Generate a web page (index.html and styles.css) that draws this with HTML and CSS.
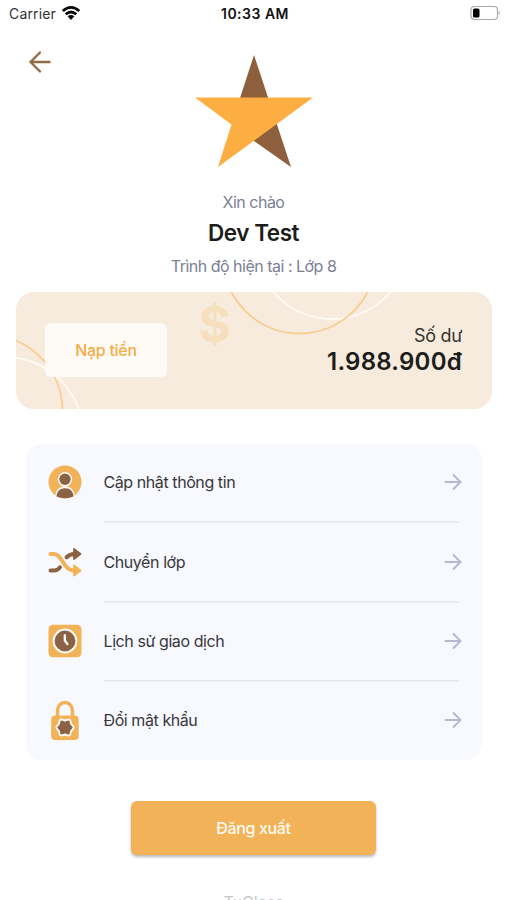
FILE: index.html
```html
<!DOCTYPE html>
<html lang="vi">
<head>
<meta charset="utf-8">
<title>Tài khoản</title>
<link rel="stylesheet" href="styles.css">
</head>
<body>
<header class="status">
  <div class="carrier"><span>Carrier</span>
    <svg width="20" height="16" viewBox="0 0 20 16" fill="none" stroke="#080808" stroke-width="2.700"><path d="M1.700 6Q10-1.300 18.300 6M4.700 9.300Q10 4.700 15.300 9.300"/><path d="M6.600 11.300Q10 8.500 13.400 11.300L10 14.900Z" fill="#080808" stroke="none"/></svg>
  </div>
  <span class="time">10:33 AM</span>
  <svg class="battery" width="31" height="16" viewBox="0 0 31 16"><rect x="1" y="1.500" width="26.500" height="13" rx="3.500" fill="#fff" stroke="#aaa" stroke-width="1.200"/><rect x="3" y="3.500" width="6.500" height="9" rx="1.500" fill="#000"/><path d="M28.700 5.800q2.400 2.200 0 4.400z" fill="#aaa"/></svg>
</header>
<nav class="nav">
  <svg width="24" height="24" viewBox="0 0 24 24" fill="none" stroke="#946a45" stroke-width="2.400" stroke-linecap="round" stroke-linejoin="round"><path d="M21.500 12H2.500M12 2.500L2.500 12l9.500 9.500"/></svg>
</nav>
<section class="profile">
  <svg class="star" width="120" height="114" viewBox="0 0 120 114"><path d="M60 1L97 113 40 73 46 44Z" fill="#8e5f3c"/><path d="M1 43.500H119L24 113 37.500 70.500Z" fill="#fdae42"/></svg>
  <p class="hello">Xin chào</p>
  <h1 class="name">Dev Test</h1>
  <p class="level">Trình độ hiện tại : Lớp 8</p>
</section>
<section class="wallet">
  <svg class="wallet-art" width="476" height="117" viewBox="0 0 476 117" fill="none">
    <circle cx="316" cy="-50" r="77" stroke="#fffaf4" stroke-width="2"/>
    <circle cx="283.500" cy="-35" r="76.500" stroke="#fbcb8b" stroke-width="1.800"/>
    <circle cx="-30" cy="119" r="76.500" stroke="#fbcb8b" stroke-width="1.800"/>
    <circle cx="-11" cy="143" r="78" stroke="#fffaf4" stroke-width="2"/>
    <text class="dollar" x="198.500" y="50" text-anchor="middle">$</text>
  </svg>
  <button class="topup">Nạp tiền</button>
  <div class="balance"><span class="balance-label">Số dư</span><strong class="amount">1.988.900đ</strong></div>
</section>
<ul class="menu">
  <li class="row">
    <svg class="icon" width="34" height="42" viewBox="0 0 34 42"><circle cx="17" cy="21" r="16.500" fill="#f2b257"/><circle cx="17" cy="18.300" r="7.200" fill="#fbfaf8"/><path d="M7.500 36v-2a9.500 9 0 0 1 19 0v2z" fill="#fbfaf8"/><circle cx="17" cy="18.300" r="5.700" fill="#8b6243"/><path d="M8.500 35.500c0-5 3.400-8.300 8.500-8.300s8.500 3.300 8.500 8.300q-8.500 3.500-17 0z" fill="#8b6243"/></svg>
    <span class="label">Cập nhật thông tin</span>
    <svg class="go" width="18" height="18" viewBox="0 0 18 18"><path d="M1.500 9h15M9.500 2l7 7-7 7"/></svg>
  </li>
  <li class="row">
    <svg class="icon" width="34" height="42" viewBox="0 0 34 42" fill="none" stroke-width="4" stroke-linecap="round" stroke-linejoin="round"><path d="M2.500 29.500h3.500q4 0 6-3.200M18.500 16.300q3-3.300 8-3.300" stroke="#8b6243"/><path d="M2.500 13h3.500c8.500 0 9 16.500 20 16.500" stroke="#f2b257"/><path d="M26 8l6.500 5-6.500 5z" fill="#8b6243" stroke="#8b6243" stroke-width="1.800"/><path d="M26 24.500l6.500 5-6.500 5z" fill="#f2b257" stroke="#f2b257" stroke-width="1.800"/></svg>
    <span class="label">Chuyển lớp</span>
    <svg class="go" width="18" height="18" viewBox="0 0 18 18"><path d="M1.500 9h15M9.500 2l7 7-7 7"/></svg>
  </li>
  <li class="row">
    <svg class="icon" width="34" height="42" viewBox="0 0 34 42"><rect x=".5" y="4.700" width="33" height="32.500" rx="4.500" fill="#f2b257"/><circle cx="17" cy="21" r="11.400" fill="#8b6243" stroke="#fbfaf8" stroke-width="2"/><path d="M16.800 15.200v5.300l2.600 3.500" fill="none" stroke="#fbfaf8" stroke-width="2.300" stroke-linecap="round" stroke-linejoin="round"/></svg>
    <span class="label">Lịch sử giao dịch</span>
    <svg class="go" width="18" height="18" viewBox="0 0 18 18"><path d="M1.500 9h15M9.500 2l7 7-7 7"/></svg>
  </li>
  <li class="row">
    <svg class="icon" width="34" height="42" viewBox="0 0 34 42"><path d="M9.500 18v-6a7.500 8.500 0 0 1 15 0V18" fill="none" stroke="#f2b257" stroke-width="3.400"/><rect x="3.200" y="16.500" width="27.500" height="24.500" rx="4" fill="#f2b257"/><path d="M10.200 28.500L12.700 25.500 13.400 22.300 17 23.200 20.600 22.300 21.300 25.500 23.800 28.500 21.300 31.500 20.600 34.700 17 33.800 13.400 34.700 12.700 31.500Z" fill="#8b6243" stroke="#fbfaf8" stroke-width="5.500" stroke-linejoin="round"/><path d="M10.200 28.500L12.700 25.700 13.400 22.300 17 23.500 20.600 22.300 21.300 25.700 23.800 28.500 21.300 31.300 20.600 34.700 17 33.500 13.400 34.700 12.700 31.300Z" fill="#8b6243" stroke="#8b6243" stroke-width="1.800" stroke-linejoin="round"/></svg>
    <span class="label">Đổi mật khẩu</span>
    <svg class="go" width="18" height="18" viewBox="0 0 18 18"><path d="M1.500 9h15M9.500 2l7 7-7 7"/></svg>
  </li>
</ul>
<button class="logout">Đăng xuất</button>
<footer class="brand">TuClass</footer>
</body>
</html>
```
FILE: styles.css
```css
* { box-sizing: border-box; }
body {
  margin: 0;
  height: 900px;
  overflow: hidden;
  background: #fff;
  color: #1c1c1a;
  font-family: Inter, "Liberation Sans", sans-serif;
}
p, h1 { margin: 0; font-weight: 400; }
button { border: 0; padding: 0; font-family: inherit; }
svg { display: block; flex: none; }
.status {
  display: grid;
  grid-template-columns: 1fr auto 1fr;
  align-items: center;
  height: 28px;
  padding: 0 6px 2px 9px;
  font-size: 14px;
}
.carrier { display: flex; align-items: center; gap: 5px; color: #333; letter-spacing: .15px; }
.carrier svg { margin-top: -1px; }
.time { font-weight: 600; font-size: 14px; letter-spacing: .5px; color: #111; }
.battery { justify-self: end; }
.nav { height: 26px; padding: 22px 0 0 28px; }
.profile { display: flex; flex-direction: column; align-items: center; }
.hello, .level { font-size: 16px; line-height: 20px; letter-spacing: -.5px; color: #7c8096; }
.hello { margin-top: 24px; }
.name { margin-top: 7px; font-size: 22.500px; line-height: 28px; font-weight: 600; letter-spacing: -.45px; }
.level { margin-top: 9px; }
.wallet {
  position: relative;
  display: flex;
  justify-content: space-between;
  align-items: center;
  height: 117px;
  margin: 16px 15px 0 16px;
  padding: 0 30px 1px 29px;
  border-radius: 18px;
  background: #f6ebdd;
  overflow: hidden;
}
.wallet-art { position: absolute; inset: 0; }
.dollar { font-size: 50px; font-weight: 700; fill: #f6dfbf; }
.topup {
  position: relative;
  width: 122px;
  height: 54px;
  padding-bottom: 1px;
  border-radius: 6px;
  background: rgba(255, 253, 251, .88);
  color: #f5ac45;
  font-size: 16px;
  font-weight: 500;
  letter-spacing: -.3px;
}
.balance { position: relative; display: flex; flex-direction: column; align-items: flex-end; }
.balance-label { font-size: 18px; line-height: 24px; letter-spacing: -.3px; color: #37332d; }
.amount { font-size: 24px; line-height: 28px; font-weight: 600; letter-spacing: .25px; }
.menu {
  list-style: none;
  margin: 35px 25px 0 26px;
  padding: 0 20px 0 22px;
  height: 316px;
  border-radius: 16px;
  background: #f8f9fe;
}
.row {
  display: grid;
  grid-template-columns: 34px 1fr 18px;
  column-gap: 21.500px;
  align-items: center;
  height: 79.400px;
  padding-bottom: 3px;
  background: linear-gradient(#e5e6ee, #e5e6ee) 55.500px calc(100% - .5px) / 355px 1.500px no-repeat;
}
.row:last-child { background: none; }
.icon { margin-left: -.5px; }
.label { font-size: 16px; letter-spacing: -.42px; color: #37373b; }
.go { fill: none; stroke: #b7b8d0; stroke-width: 2; stroke-linecap: round; stroke-linejoin: round; }
.logout {
  display: block;
  width: 245px;
  height: 54px;
  margin: 41px auto 0;
  border-radius: 6px;
  background: #f2b257;
  box-shadow: 0 2px 3px rgba(0, 0, 0, .28);
  color: #fffaf2;
  font-size: 16px;
  font-weight: 500;
  letter-spacing: -.35px;
}
.brand { margin-top: 37px; text-align: center; font-size: 16px; line-height: 20px; color: #c6c8cc; }
```
